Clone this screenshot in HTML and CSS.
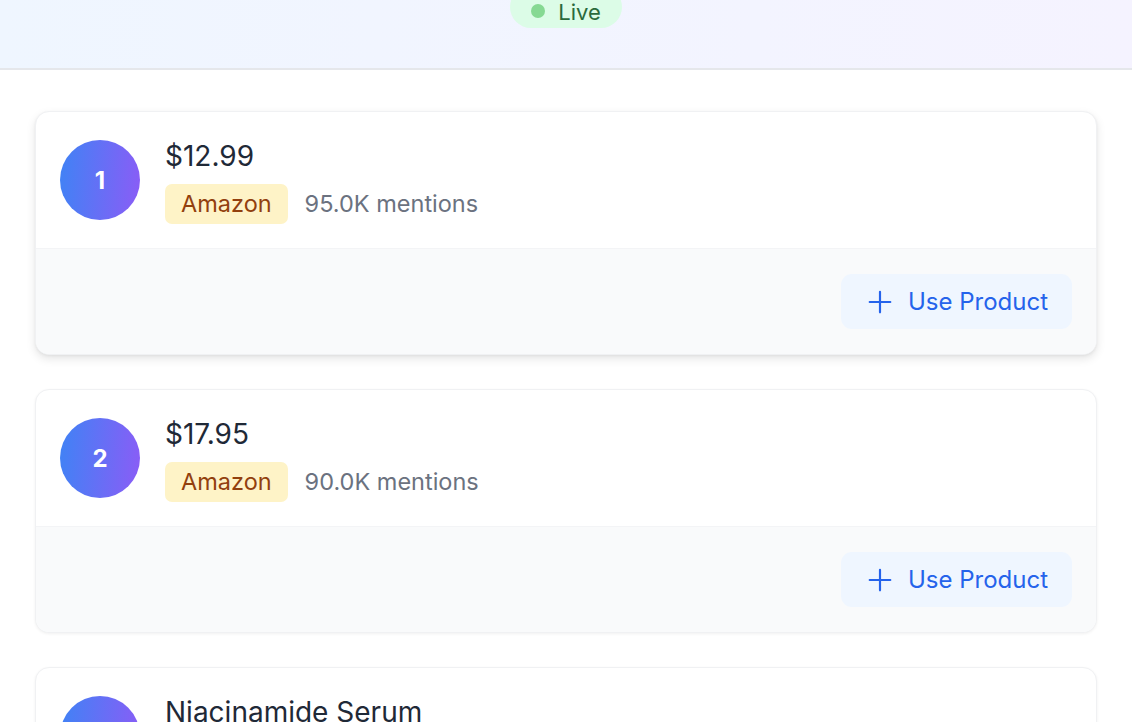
FILE: index.html
```html
<!DOCTYPE html>
<html>
<head>
<meta charset="utf-8">
<link rel="stylesheet" href="styles.css">
</head>
<body>
<header class="header">
  <div class="live"><span class="dot"></span>Live</div>
</header>
<main class="list">
  <div class="card card-active">
    <div class="card-top">
      <div class="rank">1</div>
      <div class="info">
        <div class="title">$12.99</div>
        <div class="meta"><span class="store">Amazon</span><span class="mentions">95.0K mentions</span></div>
      </div>
    </div>
    <div class="card-bottom">
      <button class="use-btn"><svg class="plus" viewBox="0 0 24 24" width="26" height="26"><path d="M12 2.5v19M2.5 12h19" stroke="currentColor" stroke-width="2" stroke-linecap="round" fill="none"/></svg>Use Product</button>
    </div>
  </div>
  <div class="card">
    <div class="card-top">
      <div class="rank">2</div>
      <div class="info">
        <div class="title">$17.95</div>
        <div class="meta"><span class="store">Amazon</span><span class="mentions">90.0K mentions</span></div>
      </div>
    </div>
    <div class="card-bottom">
      <button class="use-btn"><svg class="plus" viewBox="0 0 24 24" width="26" height="26"><path d="M12 2.5v19M2.5 12h19" stroke="currentColor" stroke-width="2" stroke-linecap="round" fill="none"/></svg>Use Product</button>
    </div>
  </div>
  <div class="card">
    <div class="card-top">
      <div class="rank">3</div>
      <div class="info">
        <div class="title">Niacinamide Serum</div>
        <div class="meta"><span class="store">Amazon</span><span class="mentions">85.0K mentions</span></div>
      </div>
    </div>
    <div class="card-bottom">
      <button class="use-btn"><svg class="plus" viewBox="0 0 24 24" width="26" height="26"><path d="M12 2.5v19M2.5 12h19" stroke="currentColor" stroke-width="2" stroke-linecap="round" fill="none"/></svg>Use Product</button>
    </div>
  </div>
</main>
</body>
</html>
```
FILE: styles.css
```css
* { box-sizing: border-box; }
html, body { margin: 0; padding: 0; }
body {
  font-family: Inter, "Noto Sans", "Liberation Sans", sans-serif;
  background: #ffffff;
  color: #1f2937;
  overflow: hidden;
}
.header {
  height: 70px;
  background: linear-gradient(90deg, #eff6ff, #f5f3ff);
  border-bottom: 2px solid #e5e7eb;
  display: flex;
  justify-content: center;
  align-items: flex-start;
  overflow: hidden;
}
.live {
  margin-top: -14px;
  height: 42px;
  padding: 10px 21px 0 21px;
  border-radius: 21px;
  background: #dcfce7;
  color: #2a6a3c;
  font-size: 22px;
  font-weight: 400;
  display: flex;
  align-items: center;
  gap: 13px;
  line-height: 28px;
}
.dot {
  width: 14px;
  height: 14px;
  border-radius: 50%;
  background: #86d993;
  margin-top: -3px;
}
.list {
  padding: 41px 35px 0;
  display: flex;
  flex-direction: column;
  gap: 34px;
}
.card {
  background: #ffffff;
  border: 1px solid #f0f1f3;
  border-radius: 14px;
  box-shadow: 0 1px 3px rgba(0,0,0,0.06);
  overflow: hidden;
}
.card-active {
  box-shadow: 0 4px 10px rgba(0,0,0,0.10), 0 1px 3px rgba(0,0,0,0.05);
}
.card-top {
  display: flex;
  align-items: flex-start;
  gap: 25px;
  padding: 25px 24px 24px;
}
.rank {
  width: 80px;
  height: 80px;
  margin-top: 3px;
  border-radius: 50%;
  background: linear-gradient(95deg, #3f83f5, #8b5cf6);
  color: #fff;
  font-size: 24px;
  font-weight: 700;
  display: flex;
  align-items: center;
  justify-content: center;
  flex-shrink: 0;
}
.info {
  margin-top: 1px;
  display: flex;
  flex-direction: column;
  gap: 10px;
}
.title {
  font-size: 28px;
  line-height: 36px;
  color: #1f2937;
}
.meta {
  display: flex;
  align-items: center;
  gap: 17px;
}
.store {
  background: #fef3c7;
  color: #92400e;
  font-size: 23.5px;
  line-height: 32px;
  padding: 4px 16px;
  border-radius: 7px;
}
.mentions {
  color: #6b7280;
  font-size: 23.5px;
  line-height: 32px;
}
.card-bottom {
  background: #f9fafb;
  border-top: 1px solid #f3f4f6;
  padding: 25px 24px 25px;
  display: flex;
  justify-content: flex-end;
}
.use-btn {
  font-family: inherit;
  border: none;
  background: #eff6ff;
  color: #2563eb;
  font-size: 24px;
  font-weight: 400;
  line-height: 31px;
  height: 55px;
  padding: 0 24px 0 26px;
  border-radius: 11px;
  display: flex;
  align-items: center;
  gap: 15px;
}
.plus { display: block; }
```
